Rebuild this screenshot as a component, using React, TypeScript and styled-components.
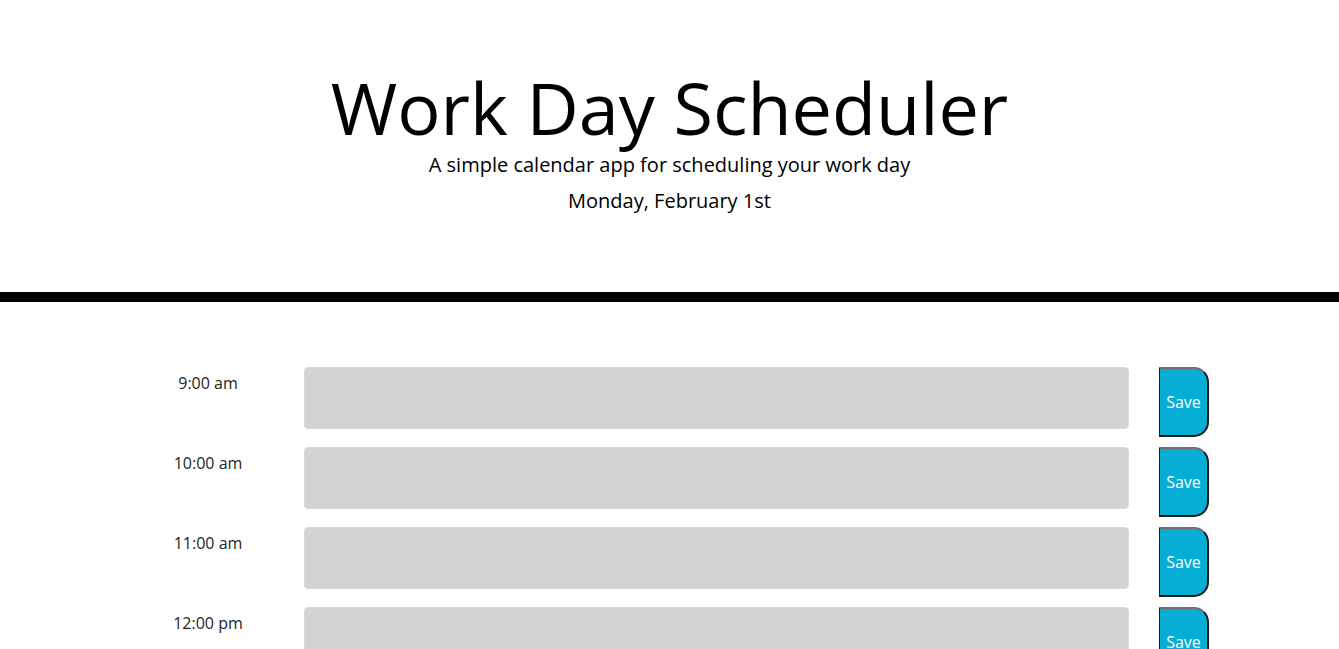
import React from "react";
import styled, { createGlobalStyle } from "styled-components";

const Global = createGlobalStyle`
  * { box-sizing: border-box; }
  body {
    margin: 0;
    font-family: "Open Sans", "Liberation Sans", sans-serif;
    color: #000;
    background: #fff;
  }
`;

const Header = styled.header`
  text-align: center;
  padding: 64px 32px 76px;
  border-bottom: 10px solid #000;
  margin-bottom: 65px;
`;

const Title = styled.h1`
  margin: 0;
  font-size: 72px;
  font-weight: 400;
  line-height: 1.2;
`;

const Lead = styled.p<{ $gap?: number }>`
  margin: ${(p) => p.$gap ?? 0}px 0 0;
  font-size: 20px;
  line-height: 30px;
`;

const Container = styled.div`
  display: flex;
  flex-direction: column;
  gap: 10px;
  padding-left: 158px;
`;

const Row = styled.div`
  display: flex;
  align-items: flex-start;
`;

const Hour = styled.div`
  width: 100px;
  text-align: center;
  font-size: 16px;
  line-height: 24px;
  color: #212529;
  padding-top: 4px;
`;

const Note = styled.textarea`
  margin-left: 46px;
  width: 825px;
  height: 62px;
  background: #d3d3d3;
  border: 1px solid #d8d8dc;
  border-radius: 4px;
  resize: none;
  font-family: inherit;
`;

const SaveBtn = styled.button`
  margin-left: 30px;
  width: 50px;
  height: 70px;
  background: #06aed5;
  color: #fff;
  font-family: "Open Sans", "Liberation Sans", sans-serif;
  font-size: 16px;
  font-weight: 500;
  padding: 0;
  border-style: solid;
  border-width: 2px 2px 2px 1px;
  border-color: #6f6f6f #1a1a1a #1a1a1a #1a1a1a;
  border-top-right-radius: 15px;
  border-bottom-right-radius: 15px;
`;

const hours = ["9:00 am", "10:00 am", "11:00 am", "12:00 pm", "1:00 pm", "2:00 pm", "3:00 pm", "4:00 pm", "5:00 pm"];

export default function App() {
  return (
    <>
      <Global />
      <Header>
        <Title>Work Day Scheduler</Title>
        <Lead>A simple calendar app for scheduling your work day</Lead>
        <Lead $gap={6}>Monday, February 1st</Lead>
      </Header>
      <Container>
        {hours.map((h) => (
          <Row key={h}>
            <Hour>{h}</Hour>
            <Note />
            <SaveBtn>Save</SaveBtn>
          </Row>
        ))}
      </Container>
    </>
  );
}
